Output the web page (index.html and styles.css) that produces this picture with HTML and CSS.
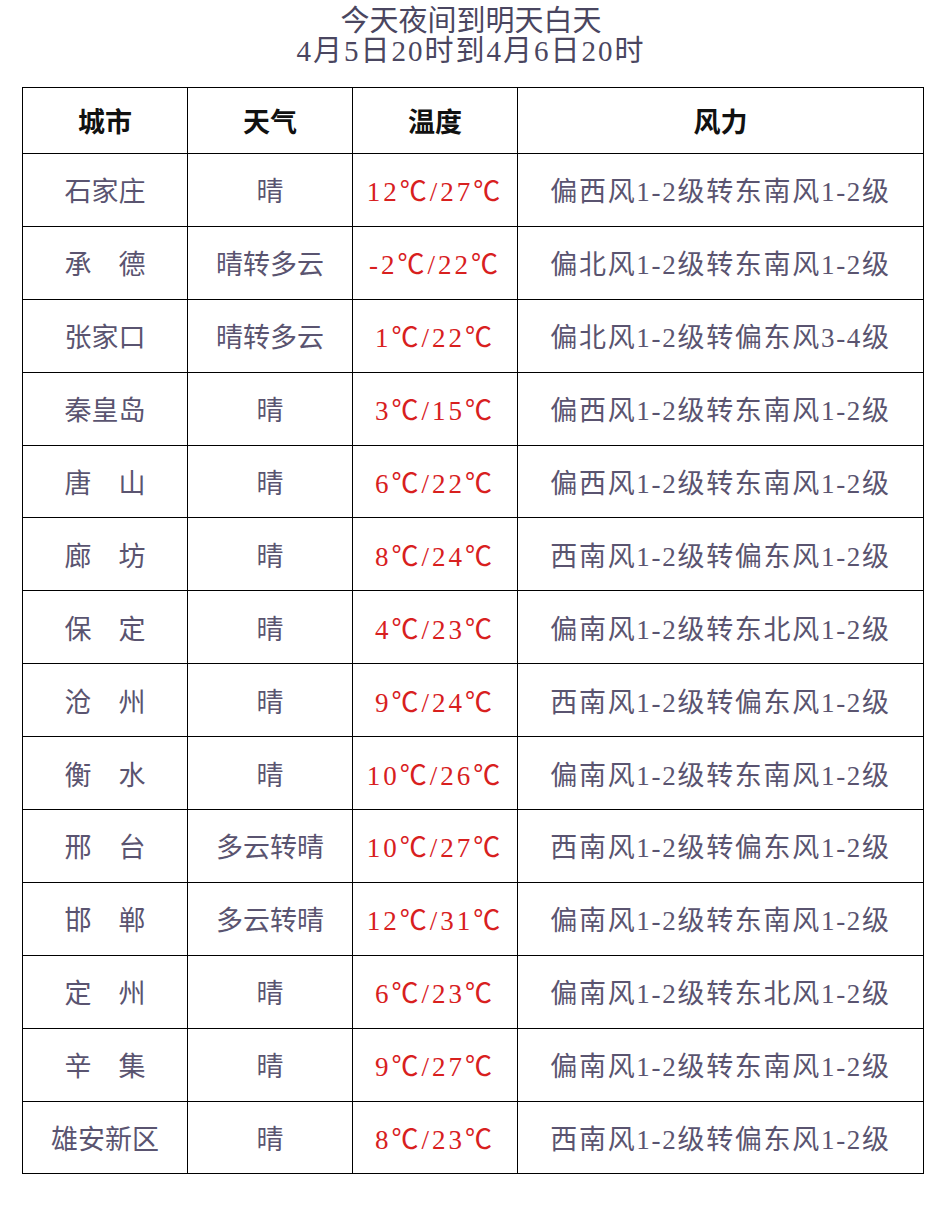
FILE: index.html
```html
<!DOCTYPE html>
<html lang="zh-CN">
<head>
<meta charset="utf-8">
<link rel="stylesheet" href="styles.css">
</head>
<body>
<div class="title">
  <div class="l1">今天夜间到明天白天</div>
  <div class="l2">4月5日20时到4月6日20时</div>
</div>
<table class="weather">
  <colgroup><col class="c1"><col class="c2"><col class="c3"><col class="c4"></colgroup>
  <thead>
    <tr><th>城市</th><th>天气</th><th>温度</th><th>风力</th></tr>
  </thead>
  <tbody>
    <tr><td>石家庄</td><td>晴</td><td class="t">12℃/27℃</td><td class="w">偏西风1-2级转东南风1-2级</td></tr>
    <tr><td>承　德</td><td>晴转多云</td><td class="t">-2℃/22℃</td><td class="w">偏北风1-2级转东南风1-2级</td></tr>
    <tr><td>张家口</td><td>晴转多云</td><td class="t">1℃/22℃</td><td class="w">偏北风1-2级转偏东风3-4级</td></tr>
    <tr><td>秦皇岛</td><td>晴</td><td class="t">3℃/15℃</td><td class="w">偏西风1-2级转东南风1-2级</td></tr>
    <tr><td>唐　山</td><td>晴</td><td class="t">6℃/22℃</td><td class="w">偏西风1-2级转东南风1-2级</td></tr>
    <tr><td>廊　坊</td><td>晴</td><td class="t">8℃/24℃</td><td class="w">西南风1-2级转偏东风1-2级</td></tr>
    <tr><td>保　定</td><td>晴</td><td class="t">4℃/23℃</td><td class="w">偏南风1-2级转东北风1-2级</td></tr>
    <tr><td>沧　州</td><td>晴</td><td class="t">9℃/24℃</td><td class="w">西南风1-2级转偏东风1-2级</td></tr>
    <tr><td>衡　水</td><td>晴</td><td class="t">10℃/26℃</td><td class="w">偏南风1-2级转东南风1-2级</td></tr>
    <tr><td>邢　台</td><td>多云转晴</td><td class="t">10℃/27℃</td><td class="w">西南风1-2级转偏东风1-2级</td></tr>
    <tr><td>邯　郸</td><td>多云转晴</td><td class="t">12℃/31℃</td><td class="w">偏南风1-2级转东南风1-2级</td></tr>
    <tr><td>定　州</td><td>晴</td><td class="t">6℃/23℃</td><td class="w">偏南风1-2级转东北风1-2级</td></tr>
    <tr><td>辛　集</td><td>晴</td><td class="t">9℃/27℃</td><td class="w">偏南风1-2级转东南风1-2级</td></tr>
    <tr><td>雄安新区</td><td>晴</td><td class="t">8℃/23℃</td><td class="w">西南风1-2级转偏东风1-2级</td></tr>
  </tbody>
</table>
</body>
</html>
```
FILE: styles.css
```css
html, body {
  margin: 0;
  padding: 0;
  background: #ffffff;
}
body {
  width: 942px;
  font-family: "Liberation Serif", "Noto Sans CJK SC", serif;
}
.title {
  padding-top: 6px;
  text-align: center;
  font-size: 29px;
  line-height: 30px;
  color: #4a4660;
  height: 87px;
  box-sizing: border-box;
}
.title .l2 {
  letter-spacing: 2px;
}
.weather {
  margin-left: 22px;
  border-collapse: collapse;
  table-layout: fixed;
  width: 901px;
}
.c1, .c2, .c3 { width: 165px; }
.c4 { width: 406px; }
.weather th, .weather td {
  border: 1.5px solid #000;
  text-align: center;
  padding: 0;
  font-size: 27px;
  white-space: nowrap;
}
.weather th {
  height: 65px;
  color: #111;
  font-weight: bold;
}
.weather td {
  height: 71.9px;
  color: #5a5470;
}
.weather td.t {
  color: #d8201e;
  letter-spacing: 3px;
}
.weather td.w {
  letter-spacing: 1.7px;
}
```
